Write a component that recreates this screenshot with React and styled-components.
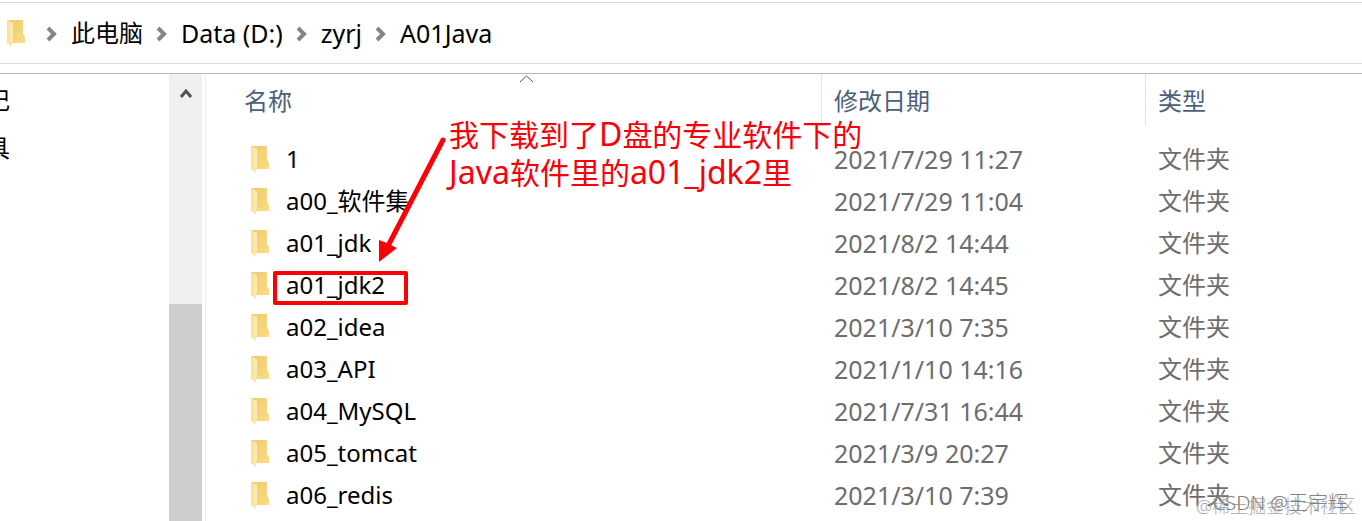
import React from "react";
import styled, { createGlobalStyle } from "styled-components";

const GlobalStyle = createGlobalStyle`
  * {
    box-sizing: border-box;
  }

  body {
    margin: 0;
    background: #ffffff;
    color: #000000;
    font-family: "Noto Sans", "Noto Sans CJK SC", sans-serif;
    font-size: 24px;
    overflow: hidden;
  }

  button {
    border: none;
    padding: 0;
    background: none;
    color: inherit;
    font: inherit;
    cursor: pointer;
  }
`;

const Window = styled.div`
  display: flex;
  flex-direction: column;
  min-height: 100vh;
  padding-top: 2px;
`;

const AddressBar = styled.nav`
  display: flex;
  align-items: center;
  height: 62px;
  padding-left: 7px;
  border-top: 1px solid #d9d9d9;
  border-bottom: 1px solid #d9d9d9;
`;

const Crumbs = styled.div`
  display: flex;
  align-items: center;
  padding-left: 7px;
`;

const Crumb = styled.button`
  font-size: ${({ $size }) => $size || "25px"};
  line-height: 34px;
  white-space: nowrap;
`;

const Separator = styled.svg`
  flex: none;
  width: 11px;
  height: 16px;
  margin: 2px 14px 0 13px;
`;

const Body = styled.div`
  display: flex;
  flex: 1;
  margin-top: 9px;
  border-top: 1px solid #b9b9b9;
`;

const Sidebar = styled.aside`
  width: 169px;
  flex: none;
  padding-top: 2px;
`;

/* Labels are cut off by the left edge of the window */
const SidebarItem = styled.div`
  display: flex;
  justify-content: flex-end;
  width: 10px;
  height: 48px;
  line-height: 48px;
  overflow: hidden;
`;

const Scrollbar = styled.div`
  display: flex;
  flex-direction: column;
  width: 33px;
  flex: none;
  background: #f0f0f0;
`;

const ScrollUp = styled.button`
  display: flex;
  justify-content: center;
  height: 230px;
  padding-top: 14px;
`;

const Thumb = styled.div`
  flex: 1;
  background: #cdcdcd;
`;

const Content = styled.main`
  position: relative;
  flex: 1;
  min-width: 0;
  margin-left: 3px;
  border-left: 1px solid #ededed;
`;

const Table = styled.table`
  width: 100%;
  table-layout: fixed;
  border-collapse: separate;
  border-spacing: 0;
`;

const HeadCell = styled.th`
  width: ${({ $width }) => $width || "auto"};
  height: 52px;
  padding: 2px 0 0 ${({ $indent }) => $indent || "12px"};
  border-right: ${({ $last }) => ($last ? "none" : "1px solid #e2e2e2")};
  color: #4c607a;
  font-weight: 400;
  line-height: 36px;
  text-align: left;
`;

const Spacer = styled.tr`
  height: 12px;
`;

const NameCell = styled.td`
  height: 42px;
  padding: 0 0 0 45px;
`;

const NameBox = styled.div`
  display: flex;
  align-items: center;
  gap: 16px;
  line-height: 34px;
  white-space: nowrap;
`;

const InfoCell = styled.td`
  padding: 0 0 0 12px;
  color: #6d6d6d;
  font-size: ${({ $size }) => $size || "24px"};
  line-height: 34px;
  white-space: nowrap;
`;

const SortMark = styled.svg`
  position: absolute;
  top: 0;
  left: 313px;
  width: 15px;
  height: 9px;
`;

const Highlight = styled.div`
  position: absolute;
  top: 197px;
  left: 67px;
  width: 135px;
  height: 34px;
  border: 4px solid #fb0007;
  border-radius: 2px;
`;

const Arrow = styled.svg`
  position: absolute;
  top: 60px;
  left: 164px;
  width: 80px;
  height: 134px;
`;

const Note = styled.p`
  position: absolute;
  top: 42px;
  left: 243px;
  margin: 0;
  color: #fb0007;
  font-size: 30px;
  line-height: 38px;
  white-space: nowrap;
`;

const Latin = styled.span`
  font-size: 32px;
  line-height: 1;
`;

const Watermark = styled.span`
  position: absolute;
  right: ${({ $right }) => $right};
  bottom: ${({ $bottom }) => $bottom};
  color: ${({ $color }) => $color};
  font-size: ${({ $size }) => $size};
  line-height: 24px;
  font-weight: 300;
  white-space: nowrap;
`;

const crumbs = [
  { label: "此电脑", size: "24px" },
  { label: "Data (D:)" },
  { label: "zyrj" },
  { label: "A01Java" },
];

const folders = [
  { name: "1", date: "2021/7/29 11:27" },
  { name: "a00_软件集", date: "2021/7/29 11:04" },
  { name: "a01_jdk", date: "2021/8/2 14:44" },
  { name: "a01_jdk2", date: "2021/8/2 14:45" },
  { name: "a02_idea", date: "2021/3/10 7:35" },
  { name: "a03_API", date: "2021/1/10 14:16" },
  { name: "a04_MySQL", date: "2021/7/31 16:44" },
  { name: "a05_tomcat", date: "2021/3/9 20:27" },
  { name: "a06_redis", date: "2021/3/10 7:39" },
];

function FolderIcon() {
  return (
    <svg width="19" height="27" viewBox="0 0 19 27" aria-hidden="true">
      <defs>
        <linearGradient id="back" x1="0" y1="0" x2="1" y2="1">
          <stop offset="0" stopColor="#eccb6c" />
          <stop offset="1" stopColor="#fbdc83" />
        </linearGradient>
        <linearGradient id="front" x1="0" y1="0" x2="1" y2="0">
          <stop offset="0" stopColor="#fbdf90" />
          <stop offset="1" stopColor="#fdebb8" />
        </linearGradient>
      </defs>
      <path d="M0 0H16V14L18 17V23H4Z" fill="url(#back)" />
      <path d="M0 0L6 3V21L5 22V27L0 23Z" fill="url(#front)" />
    </svg>
  );
}

export default function App() {
  return (
    <>
      <GlobalStyle />
      <Window>
        <AddressBar aria-label="地址">
          <FolderIcon />
          <Crumbs>
            {crumbs.map((crumb) => (
              <React.Fragment key={crumb.label}>
                <Separator viewBox="0 0 11 16" aria-hidden="true">
                  <path d="M2 2L8 8L2 14" fill="none" stroke="#858585" strokeWidth="4" />
                </Separator>
                <Crumb type="button" $size={crumb.size}>
                  {crumb.label}
                </Crumb>
              </React.Fragment>
            ))}
          </Crumbs>
        </AddressBar>
        <Body>
          <Sidebar>
            <SidebarItem>记</SidebarItem>
            <SidebarItem>具</SidebarItem>
          </Sidebar>
          <Scrollbar>
            <ScrollUp type="button" aria-label="向上滚动">
              <svg width="12" height="11" viewBox="0 0 12 11">
                <path d="M1 9L6 3L11 9" fill="none" stroke="#505050" strokeWidth="3" />
              </svg>
            </ScrollUp>
            <Thumb />
          </Scrollbar>
          <Content>
            <Table>
              <thead>
                <tr>
                  <HeadCell $width="616px" $indent="38px">
                    <button type="button">名称</button>
                  </HeadCell>
                  <HeadCell $width="324px">
                    <button type="button">修改日期</button>
                  </HeadCell>
                  <HeadCell $last>
                    <button type="button">类型</button>
                  </HeadCell>
                </tr>
              </thead>
              <tbody>
                <Spacer />
                {folders.map((folder) => (
                  <tr key={folder.name}>
                    <NameCell>
                      <NameBox>
                        <FolderIcon />
                        {folder.name}
                      </NameBox>
                    </NameCell>
                    <InfoCell $size="25px">{folder.date}</InfoCell>
                    <InfoCell>文件夹</InfoCell>
                  </tr>
                ))}
              </tbody>
            </Table>
            <SortMark viewBox="0 0 15 9" aria-hidden="true">
              <path d="M1 8L7.5 2L14 8" fill="none" stroke="#555555" />
            </SortMark>
            <Highlight />
            <Arrow viewBox="0 0 80 134" aria-hidden="true">
              <path d="M73 6L18 112" stroke="#fb0007" strokeWidth="5" strokeLinecap="round" />
              <path d="M9 128L9 106L17 109L27 114Z" fill="#fb0007" />
            </Arrow>
            <Note>
              我下载到了<Latin>D</Latin>盘的专业软件下的
              <br />
              <Latin>Java</Latin>软件里的<Latin>a01_jdk2</Latin>里
            </Note>
            <Watermark $right="6px" $bottom="3px" $size="18px" $color="#a8a8a8">
              @稀土掘金技术社区
            </Watermark>
            <Watermark $right="14px" $bottom="6px" $size="20px" $color="#858585">
              CSDN @王宇辉
            </Watermark>
          </Content>
        </Body>
      </Window>
    </>
  );
}
